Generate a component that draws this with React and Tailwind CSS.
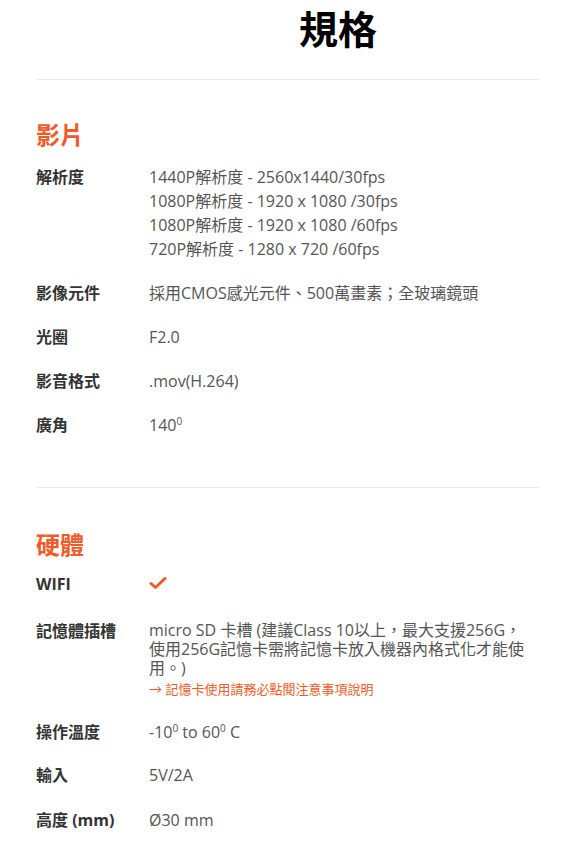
import React from 'react';

const videoSpecs = [
  {
    label: '解析度',
    lines: [
      '1440P解析度 - 2560x1440/30fps',
      '1080P解析度 - 1920 x 1080 /30fps',
      '1080P解析度 - 1920 x 1080 /60fps',
      '720P解析度 - 1280 x 720 /60fps',
    ],
  },
  { label: '影像元件', lines: ['採用CMOS感光元件、500萬畫素；全玻璃鏡頭'] },
  { label: '光圈', lines: ['F2.0'] },
  { label: '影音格式', lines: ['.mov(H.264)'] },
  { label: '廣角', lines: [<>140<sup className="text-[10px] -top-[6px]">0</sup></>] },
];

function Row({ label, children, className = '' }) {
  return (
    <div className={`flex ${className}`}>
      <div className="w-[113px] shrink-0 text-[16px] font-bold text-[#333] leading-6">{label}</div>
      <div className="flex-1 text-[16px] text-[#555] leading-6">{children}</div>
    </div>
  );
}

export default function App() {
  return (
    <div
      className="w-[570px] h-[850px] overflow-hidden bg-white pl-9 pr-[30px]"
      style={{ fontFamily: '"Open Sans", "Noto Sans CJK TC", sans-serif' }}
    >
      <h1 className="pl-[263px] pt-[5px] text-[39px] font-bold leading-[48px] text-black">規格</h1>
      <div className="mt-[26px] border-t border-[#ebebeb]" />

      <h2 className="mt-[39px] text-[24px] font-bold leading-8 text-[#f15a29]">影片</h2>
      <div className="mt-[14px] flex flex-col gap-5">
        {videoSpecs.map(s => (
          <Row key={s.label} label={s.label}>
            {s.lines.map((l, i) => (
              <div key={i}>{l}</div>
            ))}
          </Row>
        ))}
      </div>

      <div className="mt-[50px] border-t border-[#ebebeb]" />

      <h2 className="mt-[41px] text-[24px] font-bold leading-8 text-[#f15a29]">硬體</h2>
      <div className="mt-[11px] flex flex-col">
        <Row label="WIFI">
          <svg width="18" height="14" viewBox="0 0 18 14" className="mt-[4px]">
            <path d="M2 7.5 L6.5 11.5 L16 2.5" fill="none" stroke="#f15a29" strokeWidth="3" strokeLinecap="round" strokeLinejoin="round" />
          </svg>
        </Row>
        <Row label="記憶體插槽" className="mt-[23px]">
          <div className="leading-[19px] pt-[2px] whitespace-nowrap">
            <div>micro SD 卡槽 (建議Class 10以上，最大支援256G，</div>
            <div>使用256G記憶卡需將記憶卡放入機器內格式化才能使</div>
            <div>用。)</div>
          </div>
          <div className="mt-px text-[13px] leading-5 text-[#f15a29]">→ 記憶卡使用請務必點閱注意事項說明</div>
        </Row>
        <Row label="操作溫度" className="mt-[21px]">
          -10<sup className="text-[10px] -top-[6px]">0</sup> to 60<sup className="text-[10px] -top-[6px]">0</sup> C
        </Row>
        <Row label="輸入" className="mt-[19px]">5V/2A</Row>
        <Row label="高度 (mm)" className="mt-[21px]">Ø30 mm</Row>
      </div>
    </div>
  );
}
